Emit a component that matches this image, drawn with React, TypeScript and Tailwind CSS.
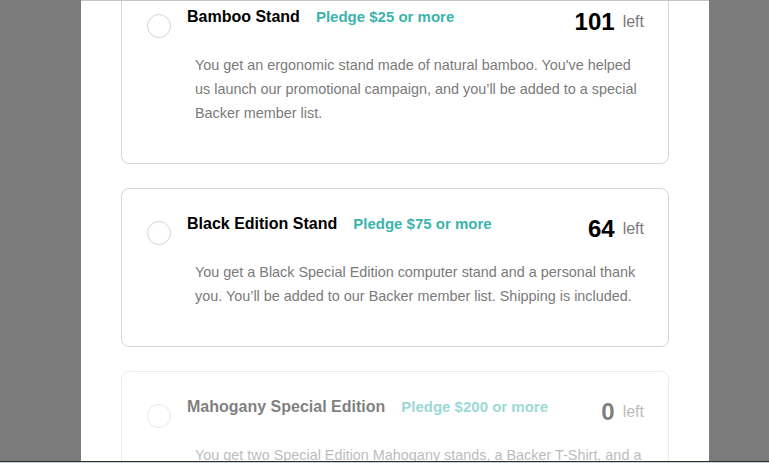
import React from "react";

interface Reward {
    title: string;
    pledge: string;
    left: number;
    description: string;
    soldOut?: boolean;
}

const rewards: Reward[] = [
    {
        title: "Bamboo Stand",
        pledge: "Pledge $25 or more",
        left: 101,
        description:
            "You get an ergonomic stand made of natural bamboo. You've helped us launch our promotional campaign, and you\u2019ll be added to a special Backer member list.",
    },
    {
        title: "Black Edition Stand",
        pledge: "Pledge $75 or more",
        left: 64,
        description:
            "You get a Black Special Edition computer stand and a personal thank you. You\u2019ll be added to our Backer member list. Shipping is included.",
    },
    {
        title: "Mahogany Special Edition",
        pledge: "Pledge $200 or more",
        left: 0,
        description:
            "You get two Special Edition Mahogany stands, a Backer T-Shirt, and a personal thank you. You\u2019ll be added to our Backer member list. Shipping is included.",
        soldOut: true,
    },
];

function RewardCard({ reward }: { reward: Reward }) {
    return (
        <div
            className={
                reward.soldOut
                    ? "shrink-0 rounded-lg border border-[#d9d9d9] bg-white pt-[25px] pb-[38px] pl-[25px] pr-[24px] opacity-50"
                    : "shrink-0 rounded-lg border border-[#d6d6d6] bg-white pt-[25px] pb-[38px] pl-[25px] pr-[24px]"
            }
        >
            <div className="flex items-start">
                <div className="mt-[7px] h-6 w-6 shrink-0 rounded-full border border-[#d4d4d4]" />
                <div className="ml-4 flex flex-1 items-start">
                    <h3 className="text-[16px] leading-5 font-bold text-black">
                        {reward.title}
                    </h3>
                    <span className="ml-4 text-[15px] leading-5 font-bold text-[#3cb4ac]">
                        {reward.pledge}
                    </span>
                    <div className="ml-auto mt-px flex items-center gap-2">
                        <span className="text-[24px] leading-7 font-bold text-black">
                            {reward.left}
                        </span>
                        <span className="text-[16px] leading-6 text-[#7a7a7a]">
                            left
                        </span>
                    </div>
                </div>
            </div>
            <p className="mt-[15px] ml-[48px] w-[449px] text-[14.4px] leading-6 text-[#7a7a7a]">
                {reward.description}
            </p>
        </div>
    );
}

export default function App() {
    return (
        <div
            className="flex h-[463px] w-[769px] flex-col overflow-hidden bg-[#7a7b7a]"
            style={{ fontFamily: '"Liberation Sans", Arial, sans-serif' }}
        >
            <div className="flex min-h-0 flex-1">
                <div className="ml-[81px] w-[628px] overflow-hidden border-t border-[#c2c5c9] bg-white px-10">
                    <div className="-mt-[20px] flex flex-col gap-6">
                        {rewards.map((r) => (
                            <RewardCard key={r.title} reward={r} />
                        ))}
                    </div>
                </div>
            </div>
            <div className="h-px bg-[#2b2f33]" />
            <div className="h-px bg-[#c9d2db]" />
        </div>
    );
}
